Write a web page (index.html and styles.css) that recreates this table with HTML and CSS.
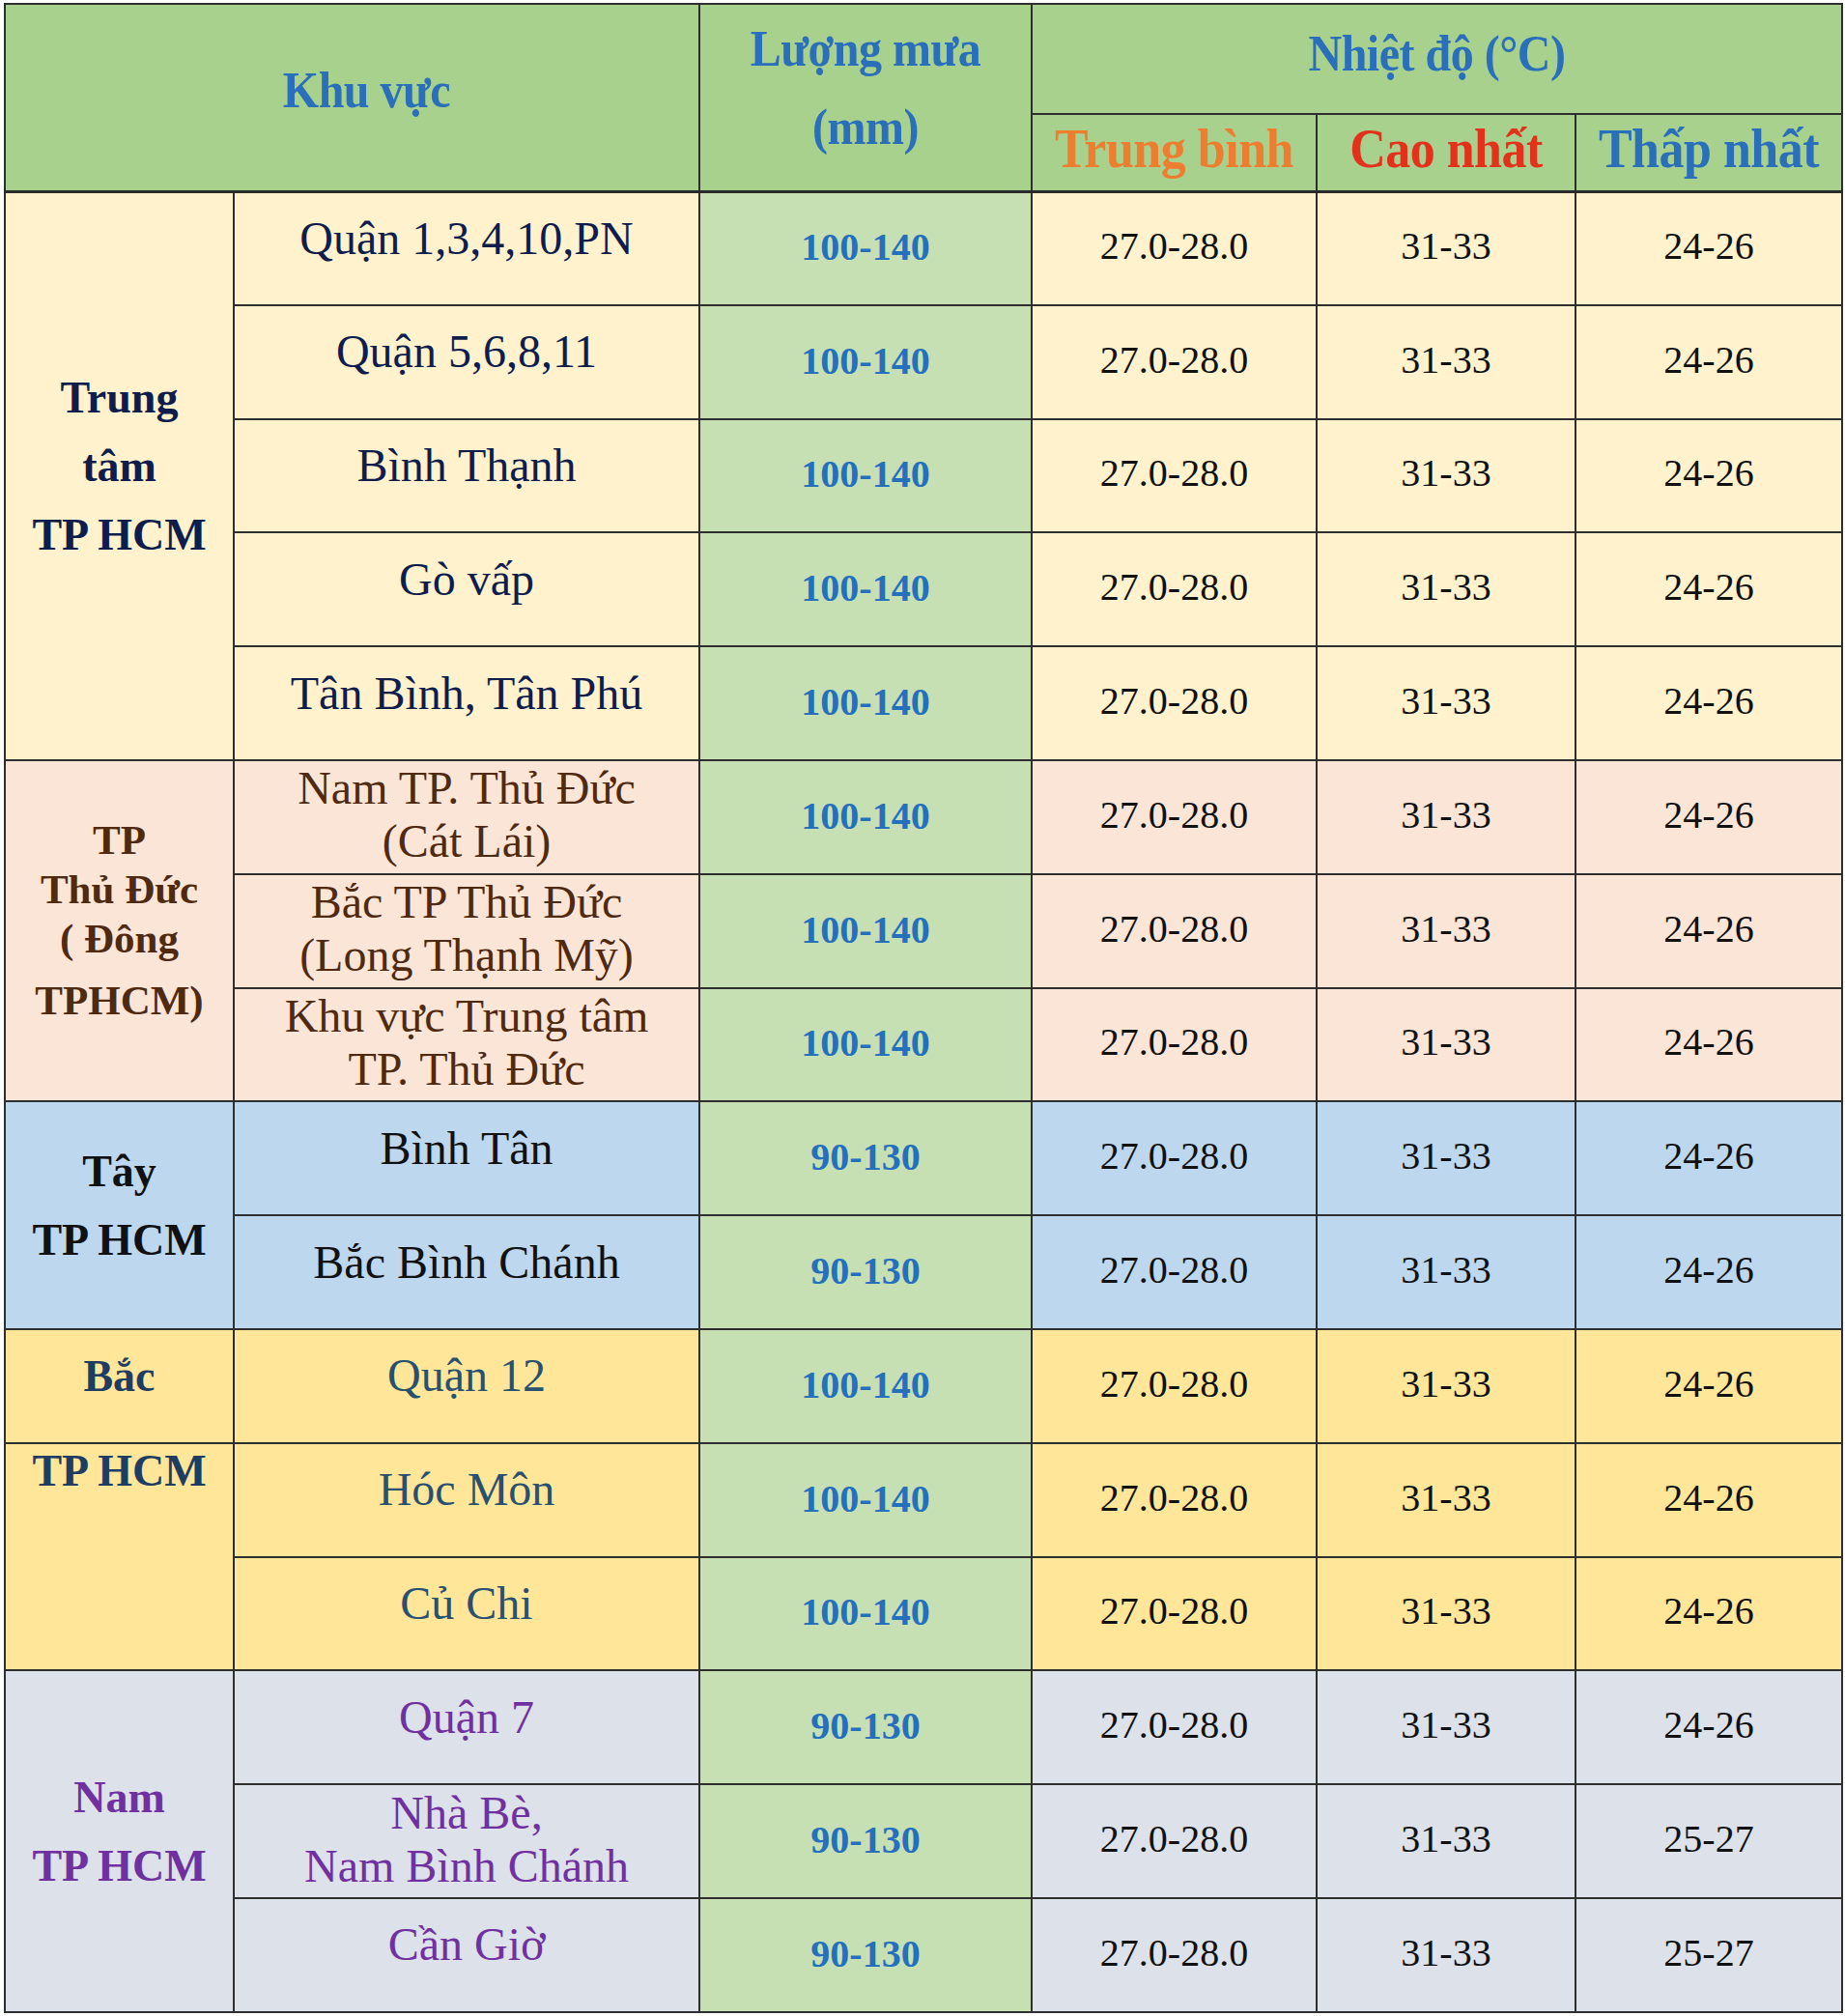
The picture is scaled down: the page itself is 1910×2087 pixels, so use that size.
FILE: index.html
```html
<!DOCTYPE html>
<html lang="vi">
<head>
<meta charset="utf-8">
<title>Dự báo lượng mưa và nhiệt độ TP HCM</title>
<link rel="stylesheet" href="styles.css">
</head>
<body>
<div class="wrap">
<table class="fc">
  <colgroup>
    <col class="c-group"><col class="c-area"><col class="c-rain"><col class="c-avg"><col class="c-max"><col class="c-min">
  </colgroup>
  <thead>
    <tr class="h1">
      <th colspan="2" rowspan="2" class="hd hd-area"><span class="tall">Khu vực</span></th>
      <th rowspan="2" class="hd hd-rain"><span class="tall">Lượng mưa<br>(mm)</span></th>
      <th colspan="3" class="hd hd-temp"><span class="tall">Nhiệt độ (°C)</span></th>
    </tr>
    <tr class="h2">
      <th class="sub avg"><span class="tall">Trung bình</span></th>
      <th class="sub max"><span class="tall">Cao nhất</span></th>
      <th class="sub min"><span class="tall">Thấp nhất</span></th>
    </tr>
  </thead>
  <tbody>
    <tr class="g-center">
      <th rowspan="5" class="grp">Trung<br>tâm<br>TP HCM</th>
      <td class="area">Quận 1,3,4,10,PN</td><td class="rain">100-140</td><td class="t">27.0-28.0</td><td class="t">31-33</td><td class="t">24-26</td>
    </tr>
    <tr class="g-center"><td class="area">Quận 5,6,8,11</td><td class="rain">100-140</td><td class="t">27.0-28.0</td><td class="t">31-33</td><td class="t">24-26</td></tr>
    <tr class="g-center"><td class="area">Bình Thạnh</td><td class="rain">100-140</td><td class="t">27.0-28.0</td><td class="t">31-33</td><td class="t">24-26</td></tr>
    <tr class="g-center"><td class="area">Gò vấp</td><td class="rain">100-140</td><td class="t">27.0-28.0</td><td class="t">31-33</td><td class="t">24-26</td></tr>
    <tr class="g-center"><td class="area">Tân Bình, Tân Phú</td><td class="rain">100-140</td><td class="t">27.0-28.0</td><td class="t">31-33</td><td class="t">24-26</td></tr>

    <tr class="g-east">
      <th rowspan="3" class="grp grp-east"><span class="ln">TP</span><span class="ln">Thủ Đức</span><span class="ln">( Đông</span><span class="ln last">TPHCM)</span></th>
      <td class="area two">Nam TP. Thủ Đức<br>(Cát Lái)</td><td class="rain">100-140</td><td class="t">27.0-28.0</td><td class="t">31-33</td><td class="t">24-26</td>
    </tr>
    <tr class="g-east"><td class="area two">Bắc TP Thủ Đức<br>(Long Thạnh Mỹ)</td><td class="rain">100-140</td><td class="t">27.0-28.0</td><td class="t">31-33</td><td class="t">24-26</td></tr>
    <tr class="g-east"><td class="area two">Khu vực Trung tâm<br>TP. Thủ Đức</td><td class="rain">100-140</td><td class="t">27.0-28.0</td><td class="t">31-33</td><td class="t">24-26</td></tr>

    <tr class="g-west">
      <th rowspan="2" class="grp">Tây<br>TP HCM</th>
      <td class="area">Bình Tân</td><td class="rain">90-130</td><td class="t">27.0-28.0</td><td class="t">31-33</td><td class="t">24-26</td>
    </tr>
    <tr class="g-west"><td class="area">Bắc Bình Chánh</td><td class="rain">90-130</td><td class="t">27.0-28.0</td><td class="t">31-33</td><td class="t">24-26</td></tr>

    <tr class="g-north">
      <th class="grp">Bắc</th>
      <td class="area">Quận 12</td><td class="rain">100-140</td><td class="t">27.0-28.0</td><td class="t">31-33</td><td class="t">24-26</td>
    </tr>
    <tr class="g-north">
      <th rowspan="2" class="grp grp-top">TP HCM</th>
      <td class="area">Hóc Môn</td><td class="rain">100-140</td><td class="t">27.0-28.0</td><td class="t">31-33</td><td class="t">24-26</td>
    </tr>
    <tr class="g-north"><td class="area">Củ Chi</td><td class="rain">100-140</td><td class="t">27.0-28.0</td><td class="t">31-33</td><td class="t">24-26</td></tr>

    <tr class="g-south">
      <th rowspan="3" class="grp">Nam<br>TP HCM</th>
      <td class="area">Quận 7</td><td class="rain">90-130</td><td class="t">27.0-28.0</td><td class="t">31-33</td><td class="t">24-26</td>
    </tr>
    <tr class="g-south"><td class="area two">Nhà Bè,<br>Nam Bình Chánh</td><td class="rain">90-130</td><td class="t">27.0-28.0</td><td class="t">31-33</td><td class="t">25-27</td></tr>
    <tr class="g-south"><td class="area">Cần Giờ</td><td class="rain">90-130</td><td class="t">27.0-28.0</td><td class="t">31-33</td><td class="t">25-27</td></tr>
  </tbody>
</table>
</div>
</body>
</html>
```

FILE: styles.css
```css
html, body {
  margin: 0;
  padding: 0;
  background: #ffffff;
}

.wrap {
  padding: 3px 4px 0 4px;
}

.fc {
  width: 1902px;
  border-collapse: collapse;
  table-layout: fixed;
  font-family: "Liberation Serif", "Times New Roman", serif;
  color: #111;
}

.c-group { width: 237px; }
.c-area  { width: 482px; }
.c-rain  { width: 344px; }
.c-avg   { width: 295px; }
.c-max   { width: 268px; }
.c-min   { width: 276px; }

.fc th, .fc td {
  border: 2px solid #2e2e2e;
  padding: 0;
  text-align: center;
  vertical-align: middle;
  overflow: visible;
  white-space: nowrap;
}

/* header */
.fc thead th {
  background: #a9d18e;
  color: #2a6fba;
  font-weight: bold;
}
.h1 { height: 114px; }
.h2 { height: 80px; }
.fc thead tr:last-child th,
.fc thead th[rowspan] {
  border-bottom: 3px solid #2a2a2a;
}
.tall {
  display: inline-block;
  transform: scaleY(1.1);
}
.fc .hd {
  font-size: 48px;
  line-height: 74px;
  letter-spacing: -0.5px;
  padding-bottom: 16px;
}
.fc .hd-area { padding-left: 30px; }
.fc .hd-rain { padding-bottom: 20px; }
.fc .hd-temp { padding-bottom: 12px; }
.fc .sub {
  font-size: 52px;
  line-height: 60px;
  letter-spacing: -0.5px;
  padding-bottom: 8px;
}
.sub.avg { color: #ee7e2f; }
.sub.max { color: #e3321c; }
.sub.min { color: #2a6fba; }

/* body rows */
.fc tbody tr { height: 117.8px; }

.fc .area {
  font-size: 48px;
  line-height: 55px;
  padding-bottom: 22px;
}
.fc .area.two { padding-bottom: 5px; }

.fc .rain {
  background: #c6e0b4;
  color: #2470bd;
  font-weight: bold;
  font-size: 40px;
  padding-bottom: 3px;
}
.fc .t {
  font-size: 40px;
  color: #111;
  padding-bottom: 5px;
}

.fc .grp {
  font-weight: bold;
  font-size: 46px;
  line-height: 71px;
  padding-bottom: 20px;
}
.fc .grp-top {
  vertical-align: top;
  line-height: 56px;
  padding: 0;
}

.fc .grp-east {
  font-size: 43px;
  line-height: 51px;
  padding-top: 0;
  padding-bottom: 22px;
}
.grp-east .ln { display: block; }
.grp-east .ln.last { margin-top: 13px; }

/* group colours */
.g-center th, .g-center td { background: #fff2cc; }
.g-center .grp, .g-center .area { color: #0f1d4d; }

.g-east th, .g-east td { background: #fbe5d6; }
.g-east .grp, .g-east .area { color: #4f2a10; }

.g-west th, .g-west td { background: #bdd7ee; }
.g-west .grp, .g-west .area { color: #111111; }

.g-north th, .g-north td { background: #ffe699; }
.g-north .grp { color: #1f3d62; }
.g-north .area { color: #28506f; }

.g-south th, .g-south td { background: #dce1ea; }
.g-south .grp, .g-south .area { color: #7030a0; }

.fc tbody tr td.rain { background: #c6e0b4; }
```
